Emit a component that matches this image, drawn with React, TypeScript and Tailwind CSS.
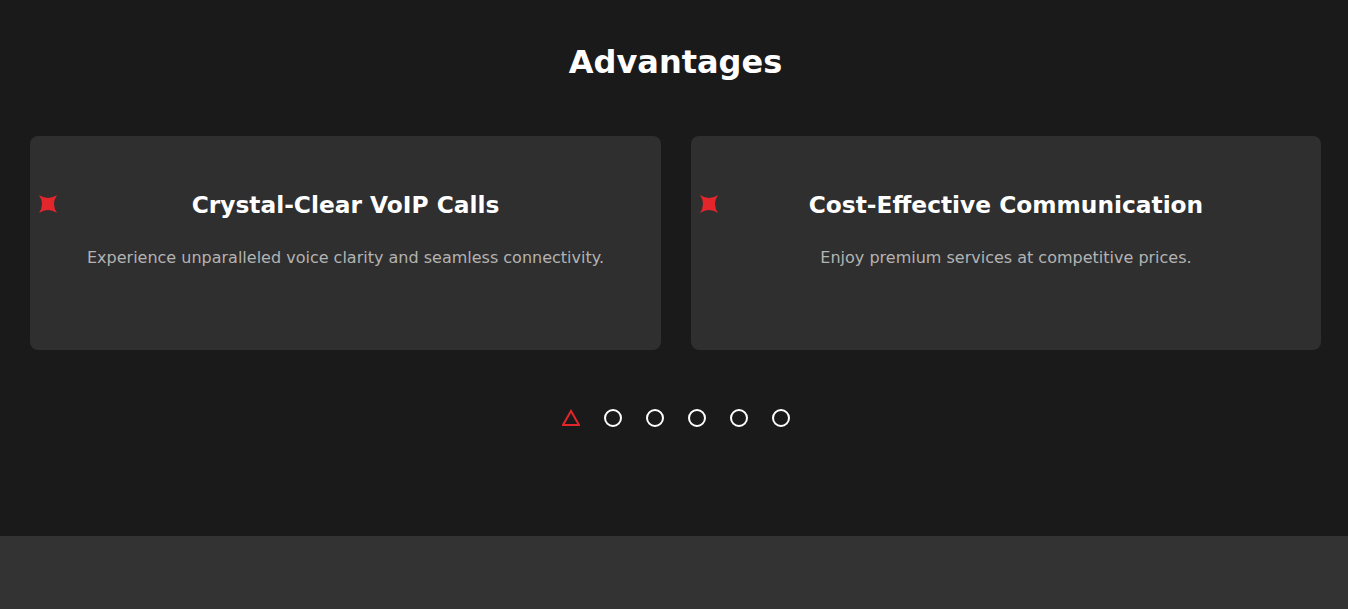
const ADVANTAGES = [
  {
    title: "Crystal-Clear VoIP Calls",
    text: "Experience unparalleled voice clarity and seamless connectivity.",
  },
  {
    title: "Cost-Effective Communication",
    text: "Enjoy premium services at competitive prices.",
  },
];

function Sparkle() {
  return (
    <svg width="20" height="20" viewBox="0 0 20 20" className="shrink-0">
      <path d="M1 1 Q10 7 19 1 Q13 10 19 19 Q10 13 1 19 Q7 10 1 1 Z" fill="#e3262b" />
    </svg>
  );
}

export default function App() {
  return (
    <div style={{ fontFamily: '"DejaVu Sans", "Open Sans", sans-serif' }}>
      <section className="bg-[#1a1a1a] h-[536px] pt-[38px] pl-[30px] pr-[27px]">
        <h2 className="text-center text-white text-[32px] font-bold leading-[48px]">Advantages</h2>

        <div className="grid grid-cols-[631px_630px] gap-[30px] mt-[50px]">
          {ADVANTAGES.map(a => (
            <div key={a.title} className="relative bg-[#2f2f2f] rounded-lg h-[214px] pt-[52px] px-4">
              <div className="absolute left-[8px] top-[58px]">
                <Sparkle />
              </div>
              <h3 className="text-center text-white text-[23.3px] font-semibold leading-[34px]">{a.title}</h3>
              <p className="text-center text-[#b3b3b3] text-[16px] leading-[24px] mt-[24px]">{a.text}</p>
            </div>
          ))}
        </div>

        {/* pager */}
        <div className="flex justify-center items-center gap-[24px] mt-[59px]">
          <svg width="18" height="18" viewBox="0 0 18 18">
            <path d="M9 2 L17 16 L1 16 Z" fill="none" stroke="#e3262b" strokeWidth="2" />
          </svg>
          {[0, 1, 2, 3, 4].map(i => (
            <span key={i} className="w-[18px] h-[18px] rounded-full border-2 border-white" />
          ))}
        </div>
      </section>
      <div className="bg-[#333333] h-[80px]" />
    </div>
  );
}
